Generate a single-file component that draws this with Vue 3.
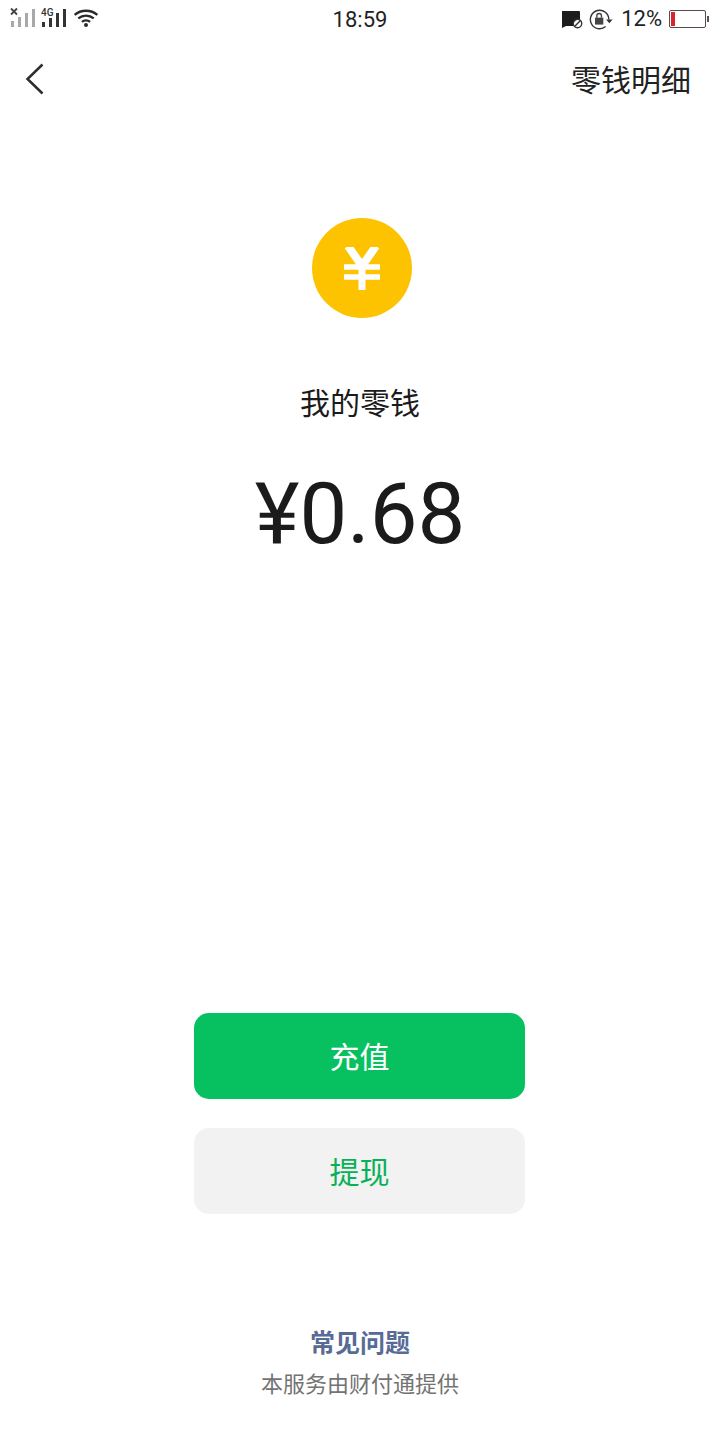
<script setup>
const actions = [
  { label: '充值', kind: 'primary' },
  { label: '提现', kind: 'secondary' }
]
</script>

<template>
  <div class="page">
    <header class="status">
      <div class="status-left">
        <svg width="60" height="28" viewBox="0 0 60 28">
          <path d="M12 9.500l6 6M18 9.500l-6 6" transform="translate(-1 -1)" stroke="#444" stroke-width="1.800" fill="none" />
          <g fill="#a8a8a8">
            <rect x="11" y="21" width="3" height="6" />
            <rect x="18" y="17" width="3" height="10" />
            <rect x="25" y="13" width="3" height="14" />
            <rect x="32" y="9" width="3" height="18" />
          </g>
          <g fill="#333">
            <rect x="42" y="22" width="3" height="5" />
            <rect x="49" y="18" width="3" height="9" />
            <rect x="56" y="13" width="3" height="14" />
          </g>
        </svg>
        <span class="net">4G</span>
        <svg class="last-bar" width="5" height="28" viewBox="0 0 5 28"><rect x="1" y="9" width="3" height="18" fill="#333" /></svg>
        <svg class="wifi" width="26" height="20" viewBox="0 0 28 22">
          <path d="M1.500 7.500C8.500 1.500 19.500 1.500 26.500 7.500M5.500 11.500C10.500 7.300 17.500 7.300 22.500 11.500M9.500 15.200C12 13.200 16 13.200 18.500 15.200" fill="none" stroke="#2b2b2b" stroke-width="2.600" />
          <circle cx="14" cy="18.800" r="2.200" fill="#2b2b2b" />
        </svg>
      </div>
      <div class="clock">18:59</div>
      <div class="status-right">
        <svg width="22" height="20" viewBox="0 0 22 20">
          <path d="M1 2h17a1 1 0 0 1 1 1v7.500a6 6 0 0 0-7 6.500H5l-4 2z" fill="#1c1c1c" />
          <circle cx="16.500" cy="14.500" r="4.200" fill="none" stroke="#333" stroke-width="1.400" />
          <path d="M13.600 17.400l5.800-5.800" stroke="#333" stroke-width="1.400" />
        </svg>
        <svg class="lock" width="24" height="21" viewBox="0 0 26 22">
          <path d="M21.500 11A10 10 0 1 0 18 18.600" fill="none" stroke="#333" stroke-width="1.500" />
          <path d="M18.500 11h7l-3.500 4z" fill="#333" />
          <rect x="6.500" y="9" width="9" height="7.500" fill="#444" />
          <path d="M8.500 9V7a2.500 2.500 0 0 1 5 0v2" fill="none" stroke="#444" stroke-width="1.500" />
        </svg>
        <span class="percent">12%</span>
        <div class="battery"><span class="level"></span></div>
      </div>
    </header>

    <nav class="nav">
      <svg width="20" height="32" viewBox="0 0 20 32">
        <path d="M17.500 1.500L2.500 16l15 14.500" fill="none" stroke="#2d2d2d" stroke-width="2.500" />
      </svg>
      <span class="nav-link">零钱明细</span>
    </nav>

    <main class="main">
      <div class="coin">
        <svg width="36" height="43" viewBox="0 0 36 43">
          <path d="M4 -1L18 19 32 -1" fill="none" stroke="#fff" stroke-width="8" />
          <path d="M0 20h36M0 30h36" stroke="#fff" stroke-width="5.500" />
          <path d="M18 18v25" stroke="#fff" stroke-width="7" />
        </svg>
      </div>
      <h1 class="title">我的零钱</h1>
      <div class="amount">¥0.68</div>
    </main>

    <section class="actions">
      <button v-for="a in actions" :key="a.label" class="btn" :class="a.kind">{{ a.label }}</button>
    </section>

    <footer class="footer">
      <div class="faq">常见问题</div>
      <div class="provider">本服务由财付通提供</div>
    </footer>
  </div>
</template>

<style scoped>
.page {
  width: 720px;
  height: 1440px;
  background: #fff;
  display: flex;
  flex-direction: column;
  font-family: "Noto Sans CJK SC", "Noto Sans", sans-serif;
  color: #1b1b1b;
  overflow: hidden;
}
.status {
  height: 38px;
  display: grid;
  grid-template-columns: 1fr auto 1fr;
  align-items: center;
  font-family: Roboto, sans-serif;
}
.status-left {
  display: flex;
  align-items: flex-start;
  height: 38px;
  position: relative;
}
.net {
  position: absolute;
  left: 41px;
  top: 7px;
  font-size: 10px;
  font-weight: 500;
  line-height: 12px;
  color: #333;
}
.last-bar { margin-left: 2px; }
.wifi { margin-left: 6px; margin-top: 8px; }
.clock {
  font-size: 22px;
  color: #222;
  line-height: 40px;
  height: 38px;
}
.status-right {
  display: flex;
  align-items: center;
  justify-content: flex-end;
  padding-right: 14px;
}
.lock { margin-left: 6px; }
.percent {
  font-size: 22px;
  margin-left: 8px;
  color: #222;
  position: relative;
  top: -1px;
}
.battery {
  width: 37px;
  height: 18px;
  margin-left: 7px;
  box-sizing: border-box;
  border: 1px solid #5a4a4a;
  border-radius: 2px;
  padding: 1px;
  position: relative;
}
.battery::after {
  content: "";
  position: absolute;
  right: -4px;
  top: 5px;
  width: 2px;
  height: 6px;
  background: #555;
}
.level {
  display: block;
  width: 4px;
  height: 100%;
  background: #d6262b;
}
.nav {
  height: 84px;
  padding: 0 29px 2px 25px;
  box-sizing: border-box;
  display: flex;
  align-items: center;
  justify-content: space-between;
}
.nav-link {
  font-size: 30px;
  color: #222;
  margin-bottom: 2px;
}
.main {
  display: flex;
  flex-direction: column;
  align-items: center;
  padding-top: 96px;
}
.coin {
  width: 100px;
  height: 100px;
  margin-left: 4px;
  border-radius: 50%;
  background: #fdc300;
  display: flex;
  align-items: center;
  justify-content: center;
}
.title {
  margin: 61px 0 0;
  font-size: 30px;
  line-height: 44px;
  font-weight: 400;
}
.amount {
  margin-top: 41px;
  font-size: 85px;
  line-height: 100px;
  font-family: Roboto, sans-serif;
}
.actions {
  margin-top: 449px;
  padding-right: 1px;
  display: flex;
  flex-direction: column;
  align-items: center;
  gap: 29px;
}
.btn {
  width: 331px;
  height: 86px;
  border: 0;
  border-radius: 15px;
  font-family: inherit;
  font-size: 30px;
  padding: 0 0 2px;
}
.primary { background: #07c160; color: #fff; }
.secondary { background: #f2f2f2; color: #07b158; }
.footer {
  margin-top: 109px;
  text-align: center;
}
.faq {
  font-size: 25px;
  line-height: 36px;
  font-weight: 700;
  color: #576b95;
}
.provider {
  margin-top: 7px;
  font-size: 22px;
  line-height: 32px;
  color: #737373;
}
</style>
